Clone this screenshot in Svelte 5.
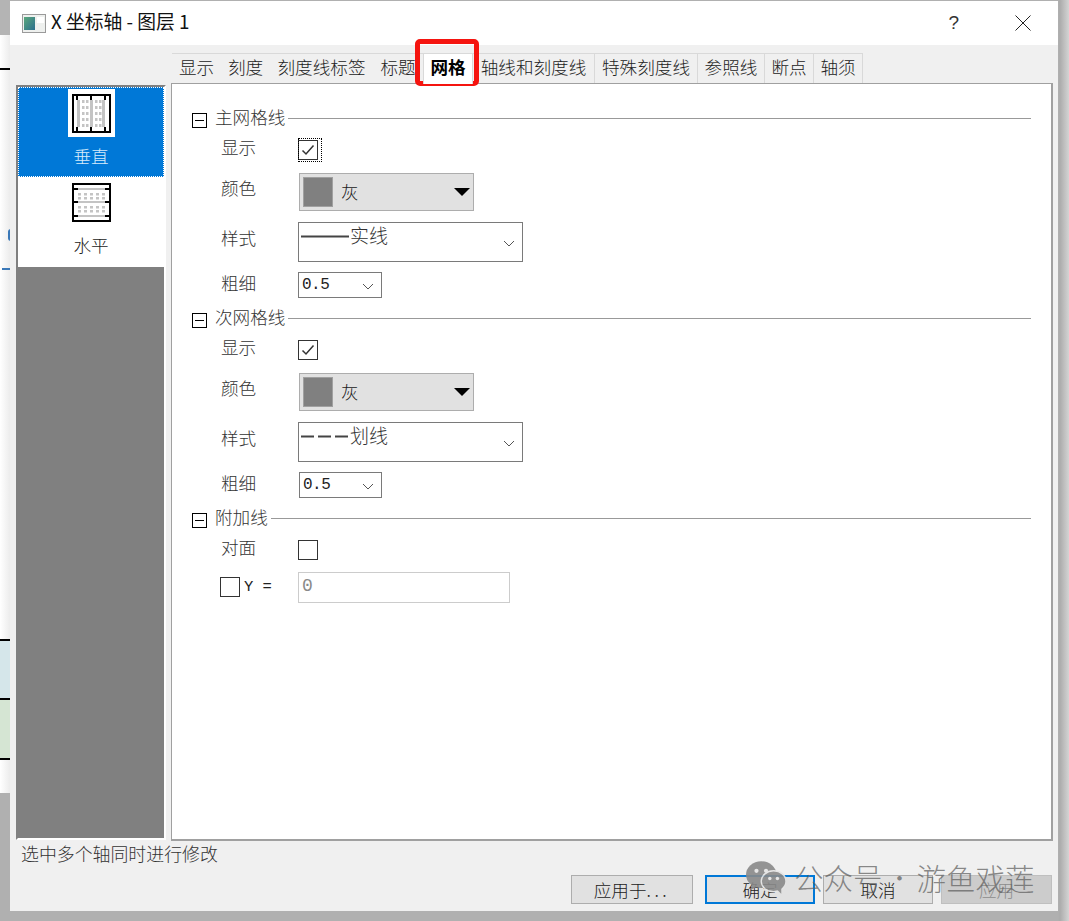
<script>
  const tabs = [
    { label: '显示', w: 49 },
    { label: '刻度', w: 49 },
    { label: '刻度线标签', w: 103 },
    { label: '标题', w: 50 },
    { label: '网格', w: 50, active: true },
    { label: '轴线和刻度线', w: 122, bordered: true },
    { label: '特殊刻度线', w: 103, bordered: true },
    { label: '参照线', w: 67, bordered: true },
    { label: '断点', w: 49, bordered: true },
    { label: '轴须', w: 49, bordered: true },
  ];

  const sections = [
    { title: '主网格线', style: '实线', dash: 'none', focus: true, selX: 0 },
    { title: '次网格线', style: '划线', dash: '13 4', focus: false, selX: 1 },
  ];

  const rows = [6, 12, 18, 24, 30];
</script>

<div class="screen">
  <div class="behind">
    <div class="b-top"></div>
    <div class="b-sheet">
      <div class="b-tick t1"></div>
      <div class="b-dot"></div>
      <div class="b-blue"></div>
      <div class="b-blueband"></div>
      <div class="b-greenband"></div>
    </div>
    <div class="b-bottom"></div>
  </div>

  <div class="dialog">
    <header class="titlebar">
      <svg class="appicon" width="24" height="19" viewBox="0 0 24 19">
        <rect x="0.5" y="0.5" width="23" height="18" fill="#eef0ee" stroke="#9a9a9a" />
        <defs>
          <linearGradient id="plot" x1="0" y1="0" x2="1" y2="1">
            <stop offset="0" stop-color="#5aa87c" />
            <stop offset="1" stop-color="#2c6f8e" />
          </linearGradient>
        </defs>
        <rect x="2" y="3" width="11" height="13" fill="url(#plot)" />
        <rect x="15" y="3" width="7" height="6" fill="#fff" />
      </svg>
      <span class="title">X 坐标轴 - 图层 1</span>
      <span class="help">?</span>
      <svg class="close" width="16" height="16" viewBox="0 0 16 16">
        <path d="M0.5 0.5L15.5 15.5M15.5 0.5L0.5 15.5" stroke="#222" fill="none" />
      </svg>
    </header>

    <div class="body">
      <aside class="side">
        <div class="item selected">
          <div class="thumb">
            <svg width="39" height="39" viewBox="0 0 39 39">
              <rect width="39" height="39" fill="#000" />
              <rect x="2" y="2" width="35" height="35" fill="#fff" />
              <rect x="5" y="6" width="3" height="27" fill="#c4c4c4" />
              <rect x="18" y="6" width="3" height="27" fill="#c4c4c4" />
              <rect x="30" y="6" width="3" height="27" fill="#c4c4c4" />
              {#each [4, 18, 32] as x}
                <rect {x} y="2" width="2" height="4" fill="#000" />
                <rect {x} y="33" width="2" height="4" fill="#000" />
              {/each}
              {#each [10, 14, 23, 27] as x}
                {#each rows as y}
                  <rect {x} {y} width="2.5" height="3" fill="#c4c4c4" />
                {/each}
              {/each}
            </svg>
          </div>
          <span class="item-label">垂直</span>
        </div>
        <div class="item">
          <div class="thumb plain">
            <svg width="39" height="39" viewBox="0 0 39 39">
              <rect width="39" height="39" fill="#000" />
              <rect x="2" y="2" width="35" height="35" fill="#fff" />
              {#each [5, 18, 32] as y}
                <rect x="6" {y} width="27" height="2" fill="#c4c4c4" />
                <rect x="2" {y} width="4" height="2" fill="#000" />
                <rect x="33" {y} width="4" height="2" fill="#000" />
              {/each}
              {#each [10, 14, 23, 27] as y}
                {#each rows as x}
                  <rect {x} {y} width="3" height="2.5" fill="#c4c4c4" />
                {/each}
              {/each}
            </svg>
          </div>
          <span class="item-label">水平</span>
        </div>
        <div class="fill"></div>
      </aside>

      <div class="main">
        <nav class="tabs">
          {#each tabs as tab}
            <div class="tab" class:active={tab.active} class:bordered={tab.bordered} style="width: {tab.w}px">
              {tab.label}
            </div>
          {/each}
        </nav>

        <div class="panel">
          {#each sections as s}
            <section class="section">
              <div class="head">
                <span class="minus"></span>
                <span class="head-title">{s.title}</span>
                <span class="rule"></span>
              </div>
              <div class="row r-check">
                <span class="lbl">显示</span>
                <span class="checkwrap" class:focus={s.focus}>
                  <span class="check">
                    <svg width="18" height="18" viewBox="0 0 18 18">
                      <path d="M3.5 9.5L7 13L14.5 4.5" fill="none" stroke="#333" stroke-width="1.5" />
                    </svg>
                  </span>
                </span>
              </div>
              <div class="row r-color">
                <span class="lbl">颜色</span>
                <div class="combo">
                  <span class="swatch"></span>
                  <span class="combo-text">灰</span>
                  <span class="arrow"></span>
                </div>
              </div>
              <div class="row r-style">
                <span class="lbl">样式</span>
                <div class="select tall">
                  <svg class="linepreview" width="49" height="3" viewBox="0 0 49 3">
                    <line x1="0" y1="1.5" x2="48" y2="1.5" stroke="#444" stroke-width="2" stroke-dasharray={s.dash} />
                  </svg>
                  <span class="style-text">{s.style}</span>
                  <svg class="chev" width="12" height="7" viewBox="0 0 12 7">
                    <path d="M1 1L6 6L11 1" fill="none" stroke="#555" />
                  </svg>
                </div>
              </div>
              <div class="row r-width">
                <span class="lbl">粗细</span>
                <div class="select short" class:nudge={s.selX}>
                  <span class="mono">0.5</span>
                  <svg class="chev" width="12" height="7" viewBox="0 0 12 7">
                    <path d="M1 1L6 6L11 1" fill="none" stroke="#555" />
                  </svg>
                </div>
              </div>
            </section>
          {/each}

          <section class="section">
            <div class="head">
              <span class="minus"></span>
              <span class="head-title">附加线</span>
              <span class="rule"></span>
            </div>
            <div class="row r-opp">
              <span class="lbl">对面</span>
              <span class="checkwrap"><span class="check"></span></span>
            </div>
            <div class="row r-y">
              <span class="check"></span>
              <span class="mono y-lbl">Y =</span>
              <div class="zero">0</div>
            </div>
          </section>
        </div>
      </div>
    </div>

    <footer class="foot">
      <div class="status">选中多个轴同时进行修改</div>
      <div class="buttons">
        <button class="btn apply-to">应用于<span class="dots">...</span></button>
        <button class="btn primary">确定</button>
        <button class="btn cancel">取消</button>
        <button class="btn disabled">应用</button>
      </div>
    </footer>
  </div>

  <div class="highlight"></div>

  <div class="watermark">
    <svg width="40" height="33" viewBox="0 0 42 34">
      <ellipse cx="16" cy="14" rx="16" ry="14" fill="#8a8a8a" />
      <path d="M6 23L5 30L13 26Z" fill="#8a8a8a" />
      <circle cx="11" cy="10" r="2.2" fill="#e6e6e6" />
      <circle cx="21" cy="10" r="2.2" fill="#e6e6e6" />
      <ellipse cx="29" cy="21" rx="13" ry="11" fill="#8a8a8a" stroke="#e6e6e6" stroke-width="1.5" />
      <path d="M33 30L37 34L37 27Z" fill="#8a8a8a" />
      <circle cx="25" cy="18" r="1.8" fill="#e6e6e6" />
      <circle cx="33" cy="18" r="1.8" fill="#e6e6e6" />
    </svg>
    <span class="wm-text">公众号</span>
    <span class="wm-dot">·</span>
    <span class="wm-text">游鱼戏莲</span>
  </div>
</div>

<style>
  :global(body) {
    margin: 0;
  }

  .screen {
    position: relative;
    width: 1069px;
    height: 921px;
    overflow: hidden;
    padding: 1px 11px 10px 10px;
    box-sizing: border-box;
    background: linear-gradient(to right, #b0b0b0 1058px, #acacac 1060px, #d4d4d4 1069px);
    font-family: "Noto Sans CJK SC", "Liberation Serif", serif;
    font-weight: 300;
    font-size: 17.6px;
    color: #222;
  }

  .behind {
    position: absolute;
    left: 0;
    top: 0;
    width: 10px;
    height: 921px;
  }

  .b-top {
    height: 35px;
    background: #b4b4b4;
  }

  .b-sheet {
    position: relative;
    height: 758px;
    background: linear-gradient(to right, #fff, #ececec);
  }

  .b-bottom {
    height: 128px;
    background: #b0b0b0;
  }

  .b-tick {
    position: absolute;
    left: 0;
    width: 10px;
    height: 2px;
    background: #000;
  }

  .t1 {
    top: 33px;
  }

  .b-dot {
    position: absolute;
    left: 8px;
    top: 194px;
    width: 3px;
    height: 12px;
    border-radius: 3px 0 0 3px;
    background: #3a78b8;
  }

  .b-blue {
    position: absolute;
    left: 2px;
    top: 233px;
    width: 8px;
    height: 2px;
    background: #3a78b8;
  }

  .b-blueband {
    position: absolute;
    left: 0;
    top: 604px;
    width: 10px;
    height: 58px;
    background: #d5e6ea;
    border-top: 2px solid #000;
  }

  .b-greenband {
    position: absolute;
    left: 0;
    top: 663px;
    width: 10px;
    height: 58px;
    background: #d5e5d3;
    border-top: 2px solid #000;
    border-bottom: 2px solid #000;
  }

  .dialog {
    position: relative;
    width: 1048px;
    height: 910px;
    background: #f0f0f0;
    display: flex;
    flex-direction: column;
  }

  .titlebar {
    height: 44px;
    flex: none;
    background: #fff;
    display: flex;
    align-items: center;
    padding-left: 12px;
  }

  .appicon {
    margin-right: 5px;
  }

  .title {
    font-size: 18.8px;
    font-weight: 400;
    line-height: 24px;
    padding-bottom: 4px;
    color: #111;
    flex: 1;
    white-space: pre;
  }

  .help {
    font-family: "Liberation Sans", sans-serif;
    font-size: 19px;
    margin-right: 56px;
    margin-top: -1px;
    color: #333;
  }

  .close {
    margin-right: 27px;
  }

  .body {
    display: flex;
    height: 796px;
    flex: none;
    padding-left: 6px;
  }

  .side {
    width: 150px;
    margin-top: 40px;
    height: 755px;
    box-sizing: border-box;
    display: flex;
    flex-direction: column;
    border-left: 2px solid #808080;
    border-top: 2px solid #808080;
    border-right: 2px solid #fff;
    border-bottom: 2px solid #fff;
    flex: none;
  }

  .item {
    height: 90px;
    flex: none;
    background: #fff;
    display: flex;
    flex-direction: column;
    align-items: center;
    box-sizing: border-box;
  }

  .item.selected {
    background: #0078d7;
    color: #fff;
    outline: 1px dotted #fff;
    outline-offset: -1px;
  }

  .thumb {
    width: 47px;
    height: 48px;
    margin-top: 2px;
    background: #fff;
    display: flex;
    align-items: center;
    justify-content: center;
    flex: none;
  }

  .thumb.plain {
    margin-top: 1px;
    height: 49px;
  }

  .item-label {
    margin-top: 7px;
    line-height: 24px;
  }

  .item:not(.selected) .item-label {
    margin-top: 6px;
  }

  .item.selected .item-label {
    color: #d7ebfb;
  }

  .fill {
    flex: 1;
    background: #808080;
  }

  .main {
    width: 882px;
    margin-left: 5px;
    display: flex;
    flex-direction: column;
    flex: none;
  }

  .tabs {
    display: flex;
    height: 30px;
    margin-top: 8px;
    padding-left: 1px;
    flex: none;
  }

  .tab {
    height: 30px;
    line-height: 26px;
    text-align: center;
    box-sizing: border-box;
    border-top: 1px solid #d9d9d9;
    white-space: nowrap;
    flex: none;
  }

  .tab.bordered {
    border-right: 1px solid #d9d9d9;
  }

  .tab.active {
    position: relative;
    background: #fff;
    font-weight: 700;
    color: #000;
    height: 31px;
    border: 1px solid #d9d9d9;
    border-bottom: 0;
    z-index: 1;
  }

  .panel {
    height: 758px;
    flex: none;
    box-sizing: border-box;
    background: #fff;
    border: 2px solid #a0a0a0;
    border-width: 1px 2px 2px 1px;
    padding: 24px 20px 0 18px;
  }

  .section {
    height: 200px;
    display: flex;
    flex-direction: column;
  }

  .head {
    display: flex;
    align-items: center;
    height: 20px;
    flex: none;
  }

  .minus {
    position: relative;
    width: 15px;
    height: 15px;
    box-sizing: border-box;
    border: 1px solid #000;
    margin-left: 2px;
    margin-top: 4px;
    flex: none;
  }

  .minus::after {
    content: "";
    position: absolute;
    left: 2px;
    right: 2px;
    top: 6px;
    height: 1px;
    background: #000;
  }

  .head-title {
    margin-left: 8px;
    line-height: 20px;
    padding-bottom: 2px;
    color: #333;
  }

  .rule {
    flex: 1;
    height: 1px;
    background: #999;
    margin-left: 3px;
  }

  .row {
    display: flex;
    align-items: center;
    flex: none;
    padding-left: 31px;
  }

  .lbl {
    width: 77px;
    flex: none;
    padding-bottom: 4px;
    line-height: 24px;
    color: #333;
  }

  .r-check {
    height: 42px;
  }

  .r-color {
    height: 38px;
    margin-top: 3px;
  }

  .r-style {
    height: 40px;
    margin-top: 11px;
  }

  .r-color .lbl,
  .r-style .lbl {
    padding-bottom: 8px;
  }

  .r-width {
    height: 26px;
    margin-top: 10px;
  }

  .r-opp {
    height: 42px;
  }

  .r-y {
    height: 32px;
    margin-top: 1px;
    padding-left: 30px;
  }

  .checkwrap {
    box-sizing: border-box;
    width: 24px;
    height: 24px;
    margin-top: 2px;
    display: flex;
    align-items: center;
    justify-content: flex-start;
    flex: none;
  }

  .checkwrap.focus {
    outline: 1px dotted #000;
    outline-offset: -1px;
  }

  .check {
    width: 20px;
    height: 20px;
    box-sizing: border-box;
    border: 1px solid #333;
    background: #fff;
    display: block;
    flex: none;
  }

  .check svg {
    display: block;
  }

  .combo {
    width: 175px;
    height: 38px;
    margin-left: 1px;
    box-sizing: border-box;
    background: #e1e1e1;
    border: 1px solid #adadad;
    display: flex;
    align-items: center;
    padding-left: 3px;
    flex: none;
  }

  .swatch {
    width: 30px;
    height: 30px;
    box-sizing: border-box;
    background: #808080;
    border: 1px solid #a0a0a0;
    flex: none;
  }

  .combo-text {
    margin-left: 8px;
    flex: 1;
    line-height: 24px;
  }

  .arrow {
    width: 0;
    height: 0;
    border-left: 8px solid transparent;
    border-right: 8px solid transparent;
    border-top: 8px solid #000;
    margin-right: 3px;
  }

  .select {
    position: relative;
    box-sizing: border-box;
    border: 1px solid #7a7a7a;
    background: #fff;
    display: flex;
    align-items: center;
    flex: none;
  }

  .tall {
    width: 225px;
    height: 40px;
    align-items: flex-start;
  }

  .short {
    width: 84px;
    height: 26px;
    padding-left: 3px;
  }

  .short.nudge {
    width: 83px;
    margin-left: 1px;
  }

  .linepreview {
    margin: 12px 0 0 2px;
    flex: none;
  }

  .style-text {
    font-size: 19px;
    line-height: 24px;
    color: #333;
  }

  .chev {
    position: absolute;
    right: 7px;
    top: 50%;
    margin-top: -2px;
  }

  .mono {
    font-family: "Liberation Mono", monospace;
    font-weight: 400;
    font-size: 16px;
    letter-spacing: -0.5px;
    color: #222;
  }

  .y-lbl {
    width: 54px;
    margin-left: 4px;
    font-size: 15.5px;
    letter-spacing: 0;
    flex: none;
  }

  .zero {
    width: 212px;
    height: 31px;
    box-sizing: border-box;
    border: 1px solid #ccc;
    padding-left: 3px;
    line-height: 27px;
    font-family: "Liberation Mono", monospace;
    font-weight: 400;
    font-size: 18px;
    color: #8a8a8a;
    flex: none;
  }

  .foot {
    position: relative;
    flex: 1;
    padding-left: 11px;
  }

  .status {
    font-size: 17.9px;
    line-height: 24px;
    color: #333;
    white-space: nowrap;
  }

  .buttons {
    position: absolute;
    right: 6px;
    top: 34px;
    display: flex;
  }

  .btn {
    height: 29px;
    box-sizing: border-box;
    padding: 0;
    border: 1px solid #adadad;
    background: #e1e1e1;
    font: inherit;
    font-size: 17.6px;
    line-height: 24px;
    color: #222;
  }

  .dots {
    letter-spacing: 3.5px;
  }

  .apply-to {
    width: 122px;
    margin-right: 12px;
  }

  .primary {
    width: 110px;
    margin-right: 8px;
    border: 2px solid #0078d7;
  }

  .cancel {
    width: 110px;
    margin-right: 8px;
  }

  .disabled {
    width: 111px;
    background: #ccc;
    border-color: #bfbfbf;
    color: #8c8c8c;
  }

  .highlight {
    position: absolute;
    left: 415px;
    top: 39px;
    width: 64px;
    height: 47px;
    box-sizing: border-box;
    border: 5px solid #f5140f;
    border-radius: 5px;
  }

  .watermark {
    position: absolute;
    left: 746px;
    top: 860px;
    display: flex;
    align-items: center;
    color: rgba(95, 95, 95, 0.72);
  }

  .wm-text {
    font-size: 29.5px;
    font-weight: 300;
    line-height: 34px;
    white-space: nowrap;
  }

  .watermark svg {
    margin-right: 8px;
    opacity: 0.9;
  }

  .wm-dot {
    width: 34px;
    text-align: center;
    font-size: 24px;
    line-height: 24px;
  }
</style>
